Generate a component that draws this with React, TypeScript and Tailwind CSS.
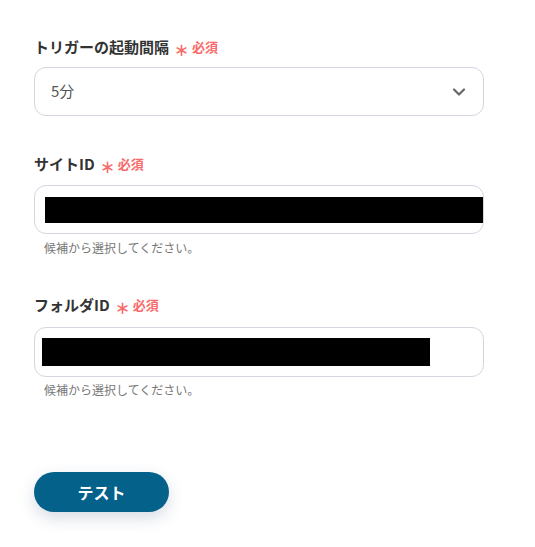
import { ChevronDown } from "lucide-react";

const font = { fontFamily: '"Noto Sans CJK JP", "Noto Sans", sans-serif' };

function Label({ text }: { text: string }) {
  return (
    <div className="flex items-center h-5 text-[15px] font-bold text-[#333333] leading-5">
      <span>{text}</span>
      <span className="ml-[5px] text-[18px] font-normal text-[#f76b6b] leading-none translate-y-[1px]">∗</span>
      <span className="ml-[3px] text-[13px] font-bold text-[#f76b6b]">必須</span>
    </div>
  );
}

function Redacted({ className }: { className: string }) {
  return <div className={`bg-black ${className}`} />;
}

export default function App() {
  return (
    <div className="w-[535px] h-[547px] bg-white" style={font}>
      <div className="pl-[34px] pt-[37px] w-[484px] flex flex-col">
        <Label text="トリガーの起動間隔" />
        <div className="mt-[10px] h-[49px] border border-[#d3d6e0] rounded-[12px] flex items-center justify-between pl-[16px] pr-[14px]">
          <span className="text-[15px] text-[#555555]">5分</span>
          <ChevronDown size={20} strokeWidth={2.6} className="text-[#666666]" />
        </div>

        <div className="mt-[38px]">
          <Label text="サイトID" />
        </div>
        <div className="mt-[11px] h-[49px] border border-[#d3d6e0] rounded-[12px] flex items-center pl-[10px]">
          <Redacted className="w-[438px] h-[26px]" />
        </div>
        <p className="mt-[5px] pl-[10px] text-[12px] leading-[18px] text-[#777777]">候補から選択してください。</p>

        <div className="mt-[38px]">
          <Label text="フォルダID" />
        </div>
        <div className="mt-[12px] h-[50px] border border-[#d3d6e0] rounded-[12px] flex items-center pl-[7px]">
          <Redacted className="w-[388px] h-[28px]" />
        </div>
        <p className="mt-[4px] pl-[10px] text-[12px] leading-[18px] text-[#777777]">候補から選択してください。</p>

        <button
          type="button"
          className="mt-[73px] w-[135px] h-[40px] rounded-full bg-[#04618a] text-white text-[16px] font-bold shadow-[0_6px_16px_rgba(30,60,110,0.18)]"
        >
          テスト
        </button>
      </div>
    </div>
  );
}
